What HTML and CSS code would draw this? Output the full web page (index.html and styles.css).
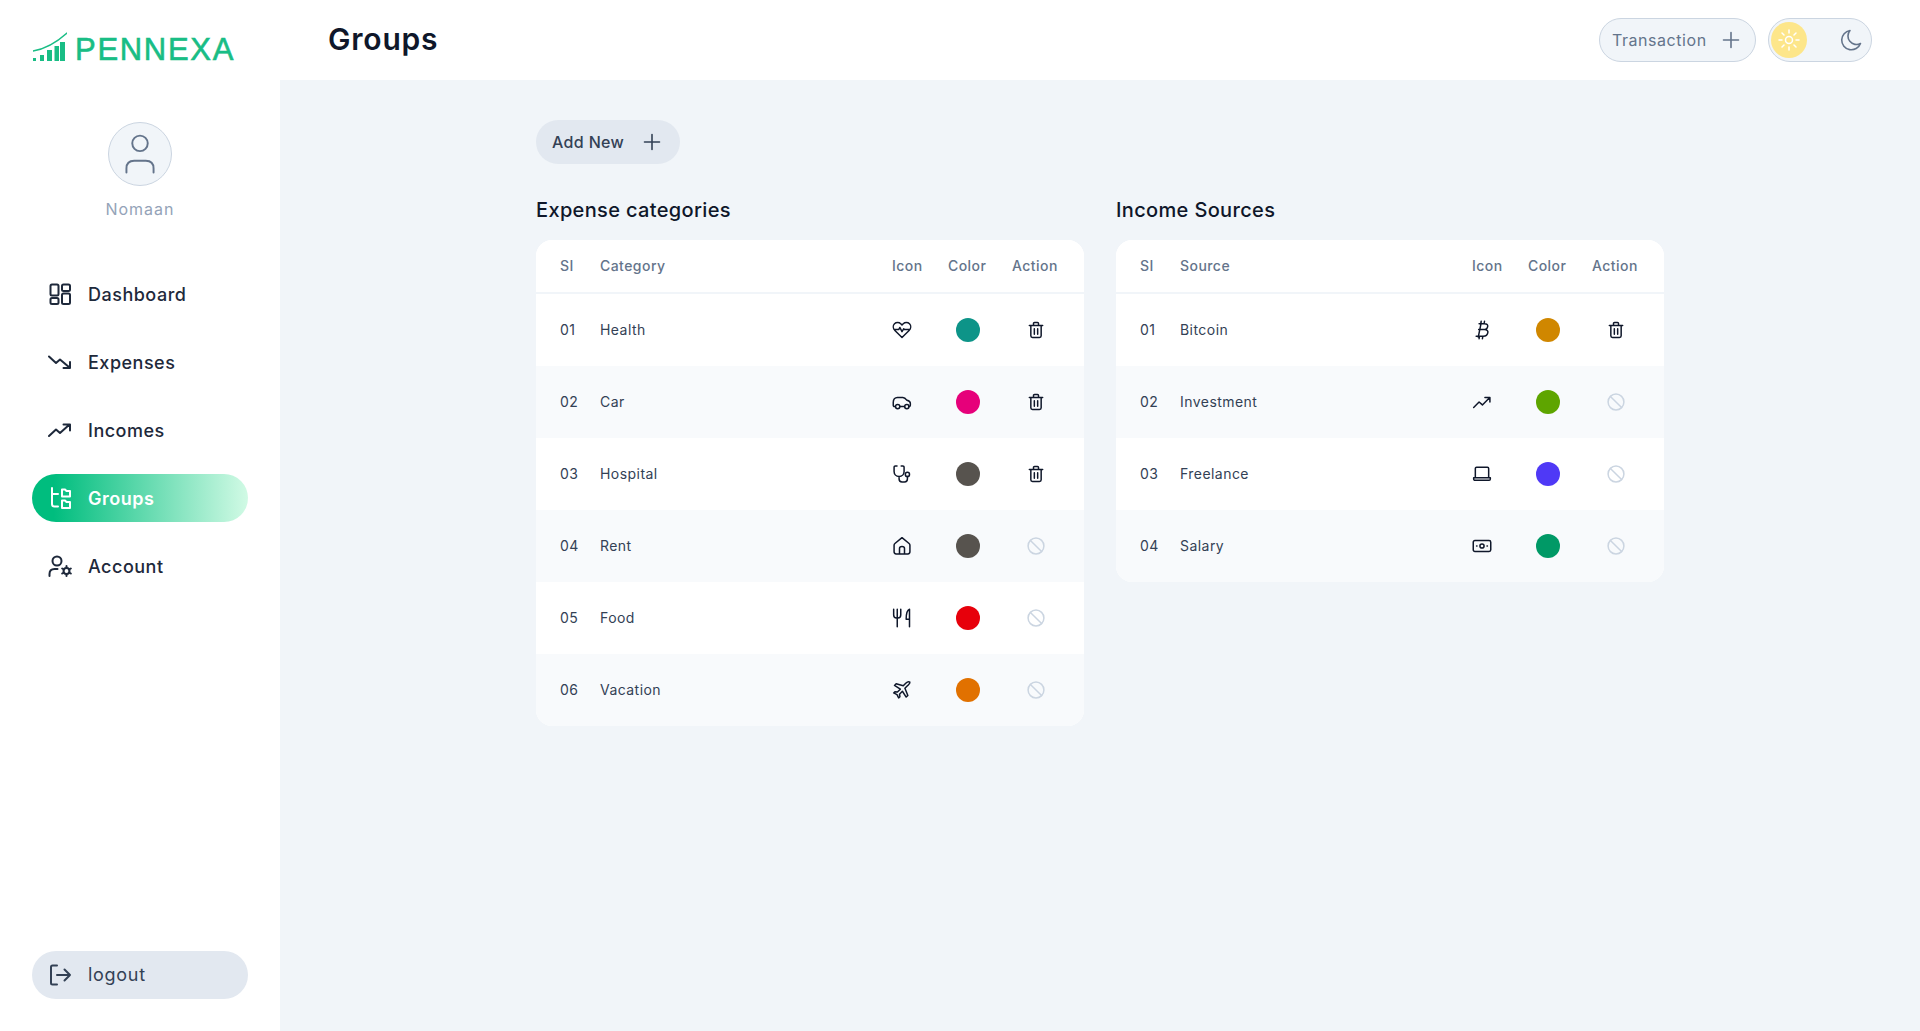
FILE: index.html
```html
<!DOCTYPE html>
<html lang="en">
<head>
  <meta charset="UTF-8">
  <title>Groups</title>
  <meta name="viewport" content="width=device-width, initial-scale=1">
  <link rel="stylesheet" href="styles.css">
</head>
<body>
  <!-- repeated icons -->
  <svg class="sprite" aria-hidden="true">
    <symbol id="i-trash" viewBox="0 0 24 24"><path d="M4 6.500h16M9 6.500V4.200c0-.7.500-1.200 1.200-1.200h3.600c.7 0 1.200.5 1.200 1.200v2.300M5.800 6.500V19c0 1.200.9 2 2 2h8.400c1.100 0 2-.8 2-2V6.500M10 10.500v6.500M14 10.500v6.500"/></symbol>
    <symbol id="i-ban" viewBox="0 0 24 24"><circle cx="12" cy="12" r="9.500"/><path d="M5.300 5.300l13.400 13.400"/></symbol>
    <symbol id="i-plus" viewBox="0 0 24 24"><path d="M12 4.500v15M4.500 12h15"/></symbol>
    <symbol id="i-up" viewBox="0 0 24 24"><path d="M2 18.500l6.500-6.500 4 3.500 8.500-8.500M15.500 6.500H21.500V12"/></symbol>
  </svg>

  <aside class="sidebar">
    <div class="logo">
      <svg class="logo-mark" viewBox="0 0 34 30" aria-hidden="true">
        <path class="logo-bars" d="M0 26h3v3H0zM7 23h4v6H7zM14 18h5v11h-5zM21.500 14h4.500v15h-4.500zM27 10h5v19h-5z"/>
        <path class="logo-arc" d="M0 19C12 17 24 10 34 1"/>
      </svg>
      <span class="logo-text">PENNEXA</span>
    </div>

    <div class="profile">
      <div class="avatar">
        <svg viewBox="0 0 64 64" aria-hidden="true"><circle cx="32" cy="21" r="8"/><path d="M18 51v-4c0-5 3-8 8-8h12c5 0 8 3 8 8v4"/></svg>
      </div>
      <div class="profile-name">Nomaan</div>
    </div>

    <nav class="nav">
      <a class="nav-item">
        <svg viewBox="0 0 24 24" aria-hidden="true"><rect x="2.500" y="2.500" width="8" height="11" rx="1.500"/><rect x="14" y="2.500" width="8" height="6.500" rx="1.500"/><rect x="2.500" y="16" width="8" height="6" rx="1.500"/><rect x="14" y="11.500" width="8" height="10.500" rx="1.500"/></svg>
        Dashboard
      </a>
      <a class="nav-item">
        <svg viewBox="0 0 24 24" aria-hidden="true"><path d="M1 6.500l7 6.500 4-3.500 9.500 8M15.500 18h6.500v-6"/></svg>
        Expenses
      </a>
      <a class="nav-item">
        <svg viewBox="0 0 24 24" aria-hidden="true"><path d="M1 18l7-6.500 4 3.500 9.500-8.500M15.500 6.500h6.500v6"/></svg>
        Incomes
      </a>
      <a class="nav-item active">
        <svg viewBox="0 0 24 24" aria-hidden="true"><path d="M4 2v16c0 1.500 1 2.500 2.500 2.500H10M4 8h6M14 3.500h3l1.500 1.500h3.500v5.500h-8zM14 14.500h3l1.500 1.500h3.500v6h-8z"/></svg>
        Groups
      </a>
      <a class="nav-item">
        <svg viewBox="0 0 24 24" aria-hidden="true"><circle cx="9" cy="7" r="4.500"/><path d="M1.500 22v-2c0-3 2-5 5-5h3"/><circle cx="18.500" cy="17" r="3"/><path d="M18.500 12v2M18.500 20v2M14.200 14.500l1.700 1M21.100 18.500l1.700 1M14.200 19.500l1.700-1M21.100 15.500l1.700-1"/></svg>
        Account
      </a>
    </nav>

    <a class="nav-item logout">
      <svg viewBox="0 0 24 24" aria-hidden="true"><path d="M9 2.500H4.500c-1 0-1.500.6-1.500 1.500v16c0 .9.500 1.500 1.500 1.500H9M9 12h13M16.500 6.500L22 12l-5.500 5.500"/></svg>
      <span>logout</span>
    </a>
  </aside>

  <div class="content">
    <header class="topbar">
      <h1 class="page-title">Groups</h1>
      <div class="topbar-actions">
        <button class="transaction-btn"><span>Transaction</span> <svg><use href="#i-plus"/></svg></button>
        <div class="theme-toggle">
          <span class="sun">
            <svg viewBox="0 0 24 24" aria-hidden="true"><circle cx="12" cy="12" r="3.500"/><path d="M12 2v3M12 19v3M2 12h3M19 12h3M5 5l2 2M17 17l2 2M5 19l2-2M17 7l2-2"/></svg>
          </span>
          <svg class="moon" viewBox="0 0 24 24" aria-hidden="true"><path d="M11 2.500a9.700 9.700 0 1 0 10.500 13A8.500 8.500 0 0 1 11 2.500z"/></svg>
        </div>
      </div>
    </header>

    <main class="main">
      <button class="add-btn"><span>Add New</span> <svg><use href="#i-plus"/></svg></button>

      <div class="columns">
        <section>
          <h2 class="section-title">Expense categories</h2>
          <div class="card">
            <div class="row head"><span>SI</span><span>Category</span><span>Icon</span><span>Color</span><span>Action</span></div>

            <div class="row">
              <span>01</span><span>Health</span>
              <svg class="cat-icon" viewBox="0 0 24 24"><path d="M12 21L3.500 12.500C1 10 1 6.500 3 4.500s5.500-2 7.500 0L12 6l1.500-1.500c2-2 5.500-2 7.500 0s2 5.500-.5 8zM2.500 11.500H8l1.500-2.500 2.500 5 2-3.500.8 1h6.700"/></svg>
              <i class="dot teal"></i>
              <svg class="act-icon"><use href="#i-trash"/></svg>
            </div>
            <div class="row">
              <span>02</span><span>Car</span>
              <svg class="cat-icon" viewBox="0 0 24 24"><path d="M4 17.500H3c-1 0-1.500-.5-1.500-1.500v-3.500c0-3.500 2-6 5-6h6.500c2 0 3.500 1.500 5 3.500 2 .5 4 1.500 4 3.500v2.500c0 1-.5 1.500-1.500 1.500h-.5M9.500 17.500h5.500"/><circle cx="6.800" cy="17.500" r="2.600"/><circle cx="17.800" cy="17.500" r="2.600"/></svg>
              <i class="dot pink"></i>
              <svg class="act-icon"><use href="#i-trash"/></svg>
            </div>
            <div class="row">
              <span>03</span><span>Hospital</span>
              <svg class="cat-icon" viewBox="0 0 24 24"><path d="M6 2.500H4c-1 0-1.500.5-1.500 1.500v5c0 3.500 2.500 6 6 6s6-2.500 6-6V4c0-1-.5-1.500-1.500-1.500h-2M8.500 15v3c0 2 1.500 3.500 3.500 3.500h3c2 0 3.500-1.500 3.500-3.500v-3"/><circle cx="18.500" cy="12.500" r="2.500"/></svg>
              <i class="dot stone"></i>
              <svg class="act-icon"><use href="#i-trash"/></svg>
            </div>
            <div class="row">
              <span>04</span><span>Rent</span>
              <svg class="cat-icon" viewBox="0 0 24 24"><path d="M12 2L3.500 9c-.7.6-1 1.200-1 2v8c0 1.500 1 2.500 2.500 2.500h14c1.500 0 2.500-1 2.500-2.500v-8c0-.8-.3-1.400-1-2zM9 21.500V15c0-1.500 1.200-2.500 3-2.500s3 1 3 2.500v6.500"/></svg>
              <i class="dot stone"></i>
              <svg class="act-icon off"><use href="#i-ban"/></svg>
            </div>
            <div class="row">
              <span>05</span><span>Food</span>
              <svg class="cat-icon" viewBox="0 0 24 24"><path d="M2 1.500v7c0 2 1.500 3.500 3.500 3.500h1.500c2 0 3.500-1.500 3.500-3.500v-7M6.300 1.500v21M21 1.500c-3 1-4 5-4 12h4M21 1.500v21"/></svg>
              <i class="dot red"></i>
              <svg class="act-icon off"><use href="#i-ban"/></svg>
            </div>
            <div class="row">
              <span>06</span><span>Vacation</span>
              <svg class="cat-icon" viewBox="0 0 24 24"><path d="M21.500 2.500c-1.500-.7-3.500 0-5 1.500L13.500 7 5 4.500 3 6.500 10 11l-3.500 3.500-3-.5L2 15.500l4 2 2 4 1.500-1.500-.5-3 3.500-3.500 4.500 7 2-2L15.500 10l3-3c1.500-1.500 3.500-3 3-4.500z"/></svg>
              <i class="dot orange"></i>
              <svg class="act-icon off"><use href="#i-ban"/></svg>
            </div>
          </div>
        </section>

        <section>
          <h2 class="section-title">Income Sources</h2>
          <div class="card">
            <div class="row head"><span>SI</span><span>Source</span><span>Icon</span><span>Color</span><span>Action</span></div>

            <div class="row">
              <span>01</span><span>Bitcoin</span>
              <svg class="cat-icon" viewBox="0 0 24 24"><path d="M7.500 20.500L11 3.500M8.500 4.500h6.500c3 0 4.200 1.500 3.800 3.500-.3 2-2 3.500-5 3.500H8M10 11.500h5c3 0 4.500 1.500 4 3.700-.4 2.300-2.500 4.300-5.500 4.300H5M11 1.500l-.5 3M15 1.500l-.5 3M9 19.500l-.5 3M13 19.500l-.5 3"/></svg>
              <i class="dot amber"></i>
              <svg class="act-icon"><use href="#i-trash"/></svg>
            </div>
            <div class="row">
              <span>02</span><span>Investment</span>
              <svg class="cat-icon"><use href="#i-up"/></svg>
              <i class="dot lime"></i>
              <svg class="act-icon off"><use href="#i-ban"/></svg>
            </div>
            <div class="row">
              <span>03</span><span>Freelance</span>
              <svg class="cat-icon" viewBox="0 0 24 24"><path d="M4 16V5.500C4 4.500 4.700 4 5.500 4h13c.8 0 1.500.5 1.500 1.500V16M2 16.500h20v1.500c0 1-.7 1.500-1.500 1.500h-17C2.700 19.500 2 19 2 18z"/></svg>
              <i class="dot indigo"></i>
              <svg class="act-icon off"><use href="#i-ban"/></svg>
            </div>
            <div class="row">
              <span>04</span><span>Salary</span>
              <svg class="cat-icon" viewBox="0 0 24 24"><rect x="1.500" y="5.500" width="21" height="13" rx="2"/><circle cx="12" cy="12" r="2.500"/><path d="M5.500 12h.5M18 12h.5"/></svg>
              <i class="dot emerald"></i>
              <svg class="act-icon off"><use href="#i-ban"/></svg>
            </div>
          </div>
        </section>
      </div>
    </main>
  </div>
</body>
</html>
```

FILE: styles.css
```css
* {
  box-sizing: border-box;
}
html, body {
  height: 100%;
}
body {
  margin: 0;
  display: flex;
  background: #f1f5f9;
  color: #0f172a;
  font-family: 'Inter', 'Open Sans', sans-serif;
  overflow: hidden;
}
svg {
  fill: none;
  stroke: currentColor;
  stroke-width: 2;
  stroke-linecap: round;
  stroke-linejoin: round;
}
.sprite {
  display: none;
}

/* sidebar */
.sidebar {
  width: 280px;
  flex-shrink: 0;
  height: 100%;
  background: #fff;
  display: flex;
  flex-direction: column;
  padding: 0 32px 32px 32px;
}
.logo {
  height: 80px;
  display: flex;
  align-items: center;
  gap: 8px;
  padding: 13px 0 0 1px;
}
.logo-mark {
  width: 34px;
  height: 30px;
}
.logo-bars {
  fill: #19bd85;
  stroke: none;
}
.logo-arc {
  stroke: #19bd85;
  stroke-width: 1.4;
}
.logo-text {
  margin-top: 6px;
  color: #19bd85;
  font-family: 'Liberation Sans', sans-serif;
  font-size: 31px;
  line-height: 30px;
  letter-spacing: 1.7px;
  white-space: nowrap;
  -webkit-text-stroke: 0.6px #19bd85;
}
.profile {
  margin-top: 42px;
  display: flex;
  flex-direction: column;
  align-items: center;
}
.avatar {
  width: 64px;
  height: 64px;
  border-radius: 50%;
  background: #f1f5f9;
  border: 1px solid #cbd5e1;
  color: #64748b;
}
.avatar svg {
  display: block;
  width: 62px;
  height: 62px;
}
.profile-name {
  margin-top: 11px;
  font-size: 16px;
  line-height: 24px;
  color: #94a3b8;
  letter-spacing: 1px;
}
.nav {
  margin-top: 49px;
  display: flex;
  flex-direction: column;
  gap: 20px;
}
.nav-item {
  height: 48px;
  display: flex;
  align-items: center;
  gap: 16px;
  padding-left: 16px;
  border-radius: 24px;
  font-size: 18px;
  font-weight: 500;
  letter-spacing: 0.5px;
  color: #1e293b;
}
.nav-item svg {
  width: 24px;
  height: 24px;
  flex-shrink: 0;
}
.nav-item.active {
  color: #fff;
  font-weight: 600;
  background: linear-gradient(90deg, #00bd7e 10%, #d1fae5 100%);
}
.logout {
  margin-top: auto;
  background: #e2e8f0;
  color: #334155;
  font-weight: 400;
  letter-spacing: 0.7px;
}
.logout span {
  padding-bottom: 2px;
}

/* top bar */
.content {
  flex: 1;
  min-width: 0;
  display: flex;
  flex-direction: column;
}
.topbar {
  height: 80px;
  flex-shrink: 0;
  background: #fff;
  display: flex;
  align-items: center;
  justify-content: space-between;
  padding: 0 48px;
}
.page-title {
  margin: 0 0 2px 0;
  font-size: 30px;
  font-weight: 600;
  line-height: 36px;
  letter-spacing: 0.8px;
}
.topbar-actions {
  display: flex;
  gap: 12px;
}
.transaction-btn {
  width: 157px;
  height: 44px;
  padding: 0 12px;
  border-radius: 22px;
  border: 1px solid #cbd5e1;
  background: #f1f5f9;
  color: #64748b;
  font: 400 16px 'Inter', sans-serif;
  letter-spacing: 0.55px;
  display: flex;
  align-items: center;
  justify-content: space-between;
}
.transaction-btn span,
.add-btn span {
  padding-bottom: 1px;
}
.transaction-btn svg {
  width: 24px;
  height: 24px;
  stroke-width: 1.6;
}
.theme-toggle {
  width: 104px;
  height: 44px;
  border-radius: 22px;
  border: 1px solid #cbd5e1;
  background: #f1f5f9;
  display: flex;
  align-items: center;
  justify-content: space-between;
  padding: 0 8px 0 2px;
}
.sun {
  width: 36px;
  height: 36px;
  border-radius: 50%;
  background: #fde68a;
  color: #fff;
  display: flex;
  align-items: center;
  justify-content: center;
}
.sun svg {
  width: 24px;
  height: 24px;
  stroke-width: 1.5;
}
.moon {
  width: 24px;
  height: 24px;
  color: #64748b;
  stroke-width: 1.6;
}

/* main */
.main {
  flex: 1;
  padding: 40px 0 0 256px;
}
.add-btn {
  width: 144px;
  height: 44px;
  padding: 0 16px;
  border: none;
  border-radius: 22px;
  background: #e2e8f0;
  color: #334155;
  font: 500 16px 'Inter', sans-serif;
  letter-spacing: 0.35px;
  display: flex;
  align-items: center;
  justify-content: space-between;
}
.add-btn svg {
  width: 24px;
  height: 24px;
  stroke-width: 1.6;
}
.columns {
  display: flex;
  align-items: flex-start;
  gap: 32px;
  margin-top: 31px;
}
.columns section {
  width: 548px;
}
.section-title {
  margin: 0 0 15px 0;
  font-size: 20px;
  font-weight: 500;
  line-height: 30px;
  letter-spacing: 0.35px;
}
.card {
  background: #fff;
  border-radius: 16px;
  overflow: hidden;
}
.row {
  height: 72px;
  display: grid;
  grid-template-columns: 40px 292px 56px 64px 72px;
  align-items: center;
  padding-left: 24px;
  font-size: 14px;
  letter-spacing: 0.45px;
  color: #334155;
}
.row > span {
  padding-bottom: 2px;
}
.row:nth-child(odd) {
  background: #f8fafc;
}
.row.head {
  height: 54px;
  background: #fff;
  border-bottom: 2px solid #f1f5f9;
  color: #64748b;
  font-weight: 500;
}
.cat-icon {
  width: 20px;
  height: 20px;
  color: #0f172a;
  stroke-width: 1.8;
}
.act-icon {
  width: 20px;
  height: 20px;
  margin-left: 14px;
  color: #0f172a;
  stroke-width: 1.8;
}
.act-icon.off {
  color: #cbd5e1;
}
.dot {
  display: block;
  width: 24px;
  height: 24px;
  margin-left: 8px;
  border-radius: 50%;
}
.teal { background: #0d9488; }
.pink { background: #e6007a; }
.stone { background: #57534e; }
.red { background: #e7000b; }
.orange { background: #e17100; }
.amber { background: #d08700; }
.lime { background: #5ea500; }
.indigo { background: #4f39f6; }
.emerald { background: #009966; }
```
